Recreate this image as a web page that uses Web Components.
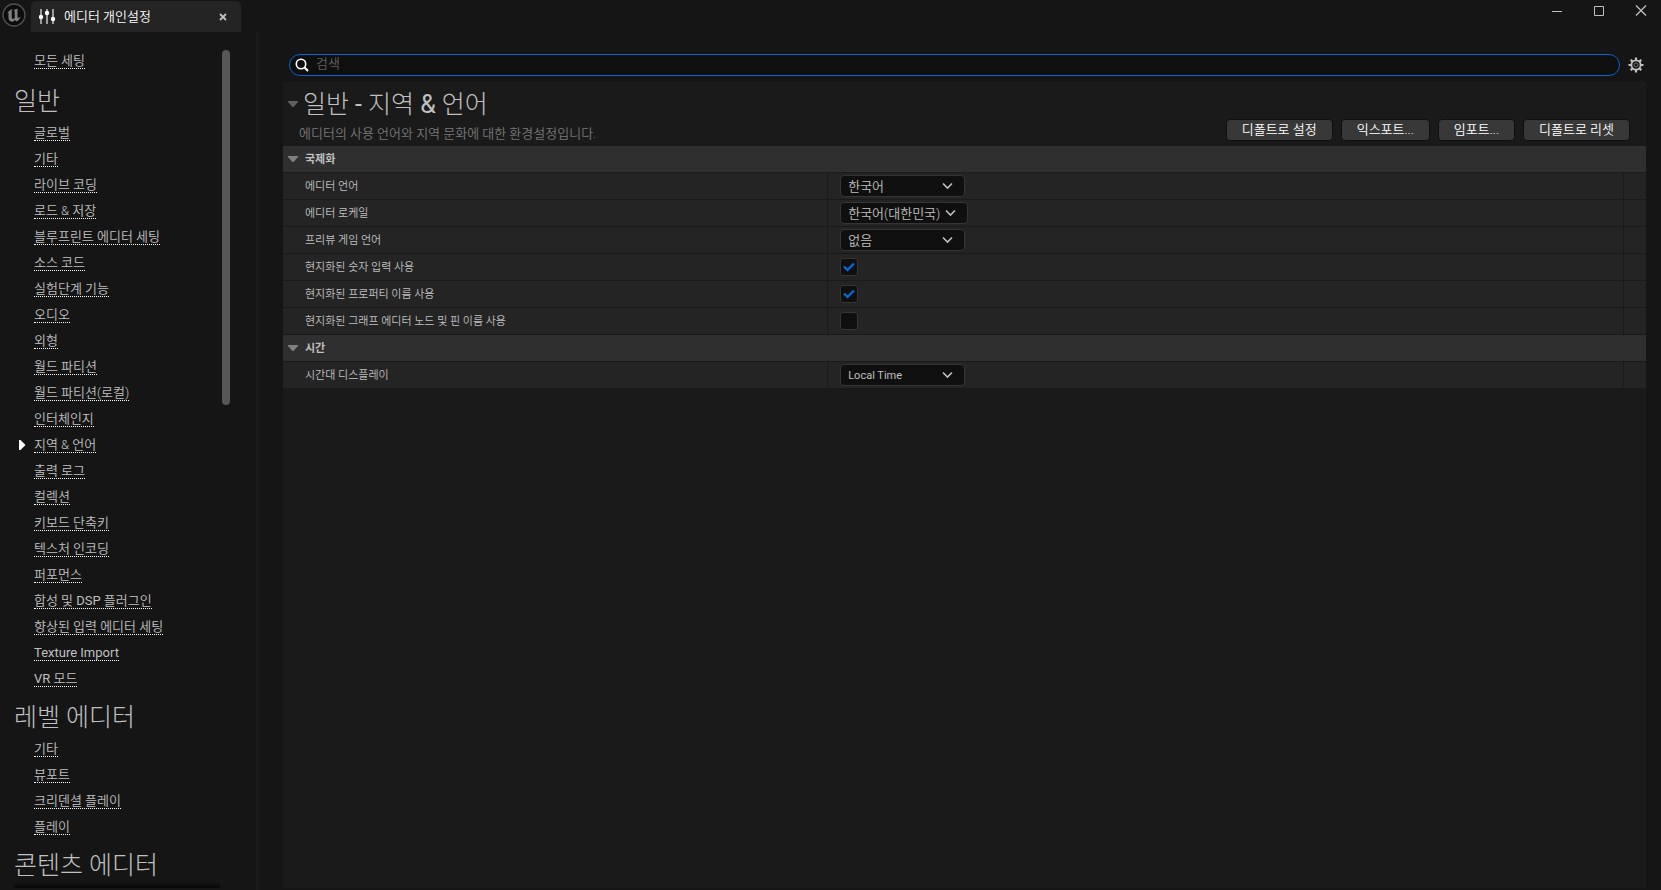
<!DOCTYPE html>
<html lang="ko">
<head>
<meta charset="utf-8">
<title>에디터 개인설정</title>
<style>
    body {
        margin: 0;
        background: #151515;
        color: #c0c0c0;
        font-family: Roboto, "Noto Sans CJK KR", sans-serif;
        font-size: 13px;
        font-weight: 350;
    }
</style>
</head>
<body>
<editor-window>
    <window-bar slot="bar" text="에디터 개인설정"></window-bar>
    <settings-nav slot="nav">
        <nav-link text="모든 세팅"></nav-link>
        <nav-section text="일반">
            <nav-link text="글로벌"></nav-link>
            <nav-link text="기타"></nav-link>
            <nav-link text="라이브 코딩"></nav-link>
            <nav-link text="로드 &amp; 저장"></nav-link>
            <nav-link text="블루프린트 에디터 세팅"></nav-link>
            <nav-link text="소스 코드"></nav-link>
            <nav-link text="실험단계 기능"></nav-link>
            <nav-link text="오디오"></nav-link>
            <nav-link text="외형"></nav-link>
            <nav-link text="월드 파티션"></nav-link>
            <nav-link text="월드 파티션(로컬)"></nav-link>
            <nav-link text="인터체인지"></nav-link>
            <nav-link text="지역 &amp; 언어" current></nav-link>
            <nav-link text="출력 로그"></nav-link>
            <nav-link text="컬렉션"></nav-link>
            <nav-link text="키보드 단축키"></nav-link>
            <nav-link text="텍스처 인코딩"></nav-link>
            <nav-link text="퍼포먼스"></nav-link>
            <nav-link text="합성 및 DSP 플러그인"></nav-link>
            <nav-link text="향상된 입력 에디터 세팅"></nav-link>
            <nav-link text="Texture Import"></nav-link>
            <nav-link text="VR 모드"></nav-link>
        </nav-section>
        <nav-section text="레벨 에디터">
            <nav-link text="기타"></nav-link>
            <nav-link text="뷰포트"></nav-link>
            <nav-link text="크리덴셜 플레이"></nav-link>
            <nav-link text="플레이"></nav-link>
        </nav-section>
        <nav-section text="콘텐츠 에디터"></nav-section>
    </settings-nav>
    <search-bar placeholder="검색"></search-bar>
    <settings-panel text="일반 - 지역 &amp; 언어" description="에디터의 사용 언어와 지역 문화에 대한 환경설정입니다.">
        <slate-button slot="actions" text="디폴트로 설정"></slate-button>
        <slate-button slot="actions" text="익스포트..."></slate-button>
        <slate-button slot="actions" text="임포트..."></slate-button>
        <slate-button slot="actions" text="디폴트로 리셋"></slate-button>
        <settings-category text="국제화">
            <settings-row text="에디터 언어" type="select" value="한국어"></settings-row>
            <settings-row text="에디터 로케일" type="select" value="한국어(대한민국)"></settings-row>
            <settings-row text="프리뷰 게임 언어" type="select" value="없음"></settings-row>
            <settings-row text="현지화된 숫자 입력 사용" type="checkbox" checked></settings-row>
            <settings-row text="현지화된 프로퍼티 이름 사용" type="checkbox" checked></settings-row>
            <settings-row text="현지화된 그래프 에디터 노드 및 핀 이름 사용" type="checkbox"></settings-row>
        </settings-category>
        <settings-category text="시간">
            <settings-row text="시간대 디스플레이" type="select" value="Local Time" small></settings-row>
        </settings-category>
    </settings-panel>
</editor-window>

<script>
// attaches an open shadow root with the given markup
class SlateElement extends HTMLElement {
    constructor() {
        super();
        this.attachShadow({mode: "open"});
        const template = document.createElement("template");
        template.innerHTML = this.constructor.markup;
        this.shadowRoot.appendChild(template.content.cloneNode(true));
    }

    connectedCallback() {
        const label = this.shadowRoot.querySelector(".text");
        if (label) label.textContent = this.getAttribute("text");
    }
}

class EditorWindow extends SlateElement {
    static markup = `
        <style>
        :host {
            display: flex;
            flex-direction: column;
            height: 100vh;
            overflow: hidden;
        }
        .body {
            display: flex;
            flex: 1;
            min-height: 0;
        }
        .splitter {
            width: 3px;
            background: #1a1a1a;
        }
        main {
            display: flex;
            flex-direction: column;
            flex: 1;
            min-width: 0;
            padding: 22px 15px 2px 24px;
        }
        </style>
        <slot name="bar"></slot>
        <div class="body">
            <slot name="nav"></slot>
            <div class="splitter"></div>
            <main><slot></slot></main>
        </div>
    `;
}

class WindowBar extends SlateElement {
    static markup = `
        <style>
        :host {
            display: flex;
            height: 32px;
        }
        svg { display: block; }
        .logo { margin: 1px 3px 0 1px; }
        .tab {
            display: flex;
            align-items: center;
            width: 210px;
            box-sizing: border-box;
            margin-top: 1px;
            padding: 0 14px 0 8px;
            border-radius: 5px 5px 0 0;
            background: #242424;
            color: #fff;
        }
        .text {
            flex: 1;
            margin-left: 8px;
            font-size: 13px;
            line-height: 16px;
        }
        button {
            padding: 0;
            border: 0;
            background: none;
            color: #c0c0c0;
        }
        .controls {
            display: flex;
            gap: 26px;
            margin: 3px 12px 0 auto;
        }
        .controls button {
            width: 16px;
            height: 16px;
        }
        </style>
        <svg class="logo" width="27" height="27" viewBox="0 0 27 27">
            <circle cx="13" cy="14" r="11" fill="#0c0c0c" stroke="#505050" stroke-width="1.3"/>
            <path d="M6 13.500C6.700 10.800 8.800 8.800 11.800 7.900c-.8.8-1 1.200-1 2v6.500c0 .9.5 1.400 1.200 1.400.6 0 1.200-.4 1.700-.9v-6.300c0-.9-.5-1.200-1.200-1.200 1.100-1.200 2.900-1.500 4.600-1.700-.5.5-.6.9-.6 1.500v6.600c0 .8.300 1.200.9 1.200.8 0 1.700-.8 2.300-1.700-.6 2.800-2.200 4.400-4.200 5.200l-1.600-1.600-1.900 1.800c-2.800 0-4.500-1.500-4.500-3.800v-4.300c0-.9-.3-1.200-1.500.9z" fill="#808080"/>
        </svg>
        <div class="tab">
            <svg width="17" height="17" viewBox="0 0 17 17">
                <g fill="#9c9c9c">
                    <rect x="1" y="1" width="2" height="15"/>
                    <rect x="7" y="1" width="2" height="15"/>
                    <rect x="13" y="1" width="2" height="15"/>
                </g>
                <g fill="#fff">
                    <circle cx="2" cy="9" r="2.200"/>
                    <circle cx="8" cy="5" r="2.200"/>
                    <circle cx="14" cy="11" r="2.200"/>
                </g>
            </svg>
            <span class="text"></span>
            <button aria-label="탭 닫기">
                <svg width="8" height="8" viewBox="0 0 8 8" fill="none" stroke="currentColor" stroke-width="1.800"><path d="M1 1l6 6M7 1L1 7"/></svg>
            </button>
        </div>
        <div class="controls">
            <button aria-label="최소화">
                <svg width="16" height="16" viewBox="0 0 16 16" fill="none" stroke="currentColor"><path d="M3 8.500h10"/></svg>
            </button>
            <button aria-label="최대화">
                <svg width="16" height="16" viewBox="0 0 16 16" fill="none" stroke="currentColor"><path d="M3.500 3.500h9v9h-9z"/></svg>
            </button>
            <button aria-label="닫기">
                <svg width="16" height="16" viewBox="0 0 16 16" fill="none" stroke="currentColor" stroke-width="1.300"><path d="M3 2.500l10 10M13 2.500l-10 10"/></svg>
            </button>
        </div>
    `;
}

class SettingsNav extends SlateElement {
    static markup = `
        <style>
        :host {
            display: flex;
            flex: none;
            position: relative;
            width: 256px;
            overflow: hidden;
        }
        nav {
            flex: 1;
            padding: 16px 0 0 14px;
        }
        .track {
            width: 8px;
            margin: 18px 26px 0 0;
        }
        .thumb {
            height: calc(42% + 2px);
            border-radius: 4px;
            background: #575757;
        }
        /* more content below the fold */
        .shade {
            position: absolute;
            right: 36px;
            bottom: 2px;
            left: 14px;
            height: 6px;
            background: linear-gradient(transparent, #080808);
        }
        ::slotted(nav-link) { margin-bottom: 2px; }
        </style>
        <nav><slot></slot></nav>
        <div class="track"><div class="thumb"></div></div>
        <div class="shade"></div>
    `;
}

class NavSection extends SlateElement {
    static markup = `
        <style>
        :host { display: block; }
        h2 {
            margin: 0;
            padding: 10px 0 2px;
            font-size: 25px;
            font-weight: 300;
            line-height: 32px;
            white-space: nowrap;
        }
        </style>
        <h2 class="text"></h2>
        <slot></slot>
    `;
}

class NavLink extends SlateElement {
    static markup = `
        <style>
        :host {
            display: flex;
            align-items: center;
            height: 26px;
        }
        svg {
            width: 7px;
            margin: 0 8px 0 5px;
            visibility: hidden;
        }
        :host([current]) svg { visibility: visible; }
        a {
            border-bottom: 1px dotted #fff;
            color: inherit;
            font-size: 13px;
            line-height: 14px;
            text-decoration: none;
            white-space: nowrap;
        }
        a b { font-weight: 400; }
        </style>
        <svg height="10" viewBox="0 0 7 10" fill="#fff"><path d="M0 0h1.500L6.500 5 1.500 10H0z"/></svg>
        <a class="text" href="#"></a>
    `;

    connectedCallback() {
        super.connectedCallback();

        // Latin words need the regular weight to look as dark as the Hangul
        const link = this.shadowRoot.querySelector("a");
        link.innerHTML = link.innerHTML.replace(/[A-Z][A-Za-z ]*[A-Za-z]/g, "<b>$&</b>");
    }
}

class SearchBar extends SlateElement {
    static markup = `
        <style>
        :host {
            display: flex;
            align-items: center;
            gap: 8px;
            padding: 0 2px 6px 6px;
        }
        svg { display: block; }
        label {
            display: flex;
            flex: 1;
            align-items: center;
            gap: 7px;
            height: 20px;
            padding: 0 6px 0 5px;
            border: 1px solid #0068d0;
            border-radius: 11px;
            background: #0f0f0f;
            color: #fff;
        }
        input {
            flex: 1;
            min-width: 0;
            padding: 0 0 2px;
            border: 0;
            outline: 0;
            background: none;
            color: #c0c0c0;
            font: inherit;
            line-height: 18px;
        }
        input::placeholder { color: #606060; }
        button {
            padding: 0;
            border: 0;
            background: none;
            color: #c0c0c0;
        }
        </style>
        <label>
            <svg width="14" height="14" viewBox="0 0 14 14" fill="none" stroke="currentColor" stroke-width="1.600"><circle cx="6" cy="6" r="4.700"/><path d="M9.300 9.300L13 13" stroke-width="2"/></svg>
            <input type="text" aria-label="검색">
        </label>
        <button aria-label="설정">
            <svg width="16" height="16" viewBox="0 0 16 16" fill="none" stroke="currentColor">
                <circle cx="8" cy="8" r="4.600" stroke-width="1.800"/>
                <circle cx="8" cy="8" r="2" stroke="#707070"/>
                <path d="M8 .5V3M8 13v2.500M.5 8H3M13 8h2.500M2.700 2.700l1.800 1.800M11.500 11.500l1.800 1.800M2.700 13.300l1.800-1.800M11.500 4.500l1.800-1.800" stroke-width="2.200"/>
            </svg>
        </button>
    `;

    connectedCallback() {
        this.shadowRoot.querySelector("input").placeholder = this.getAttribute("placeholder");
    }
}

class SettingsPanel extends SlateElement {
    static markup = `
        <style>
        :host {
            display: block;
            flex: 1;
            background: #1a1a1a;
        }
        header {
            display: flex;
            align-items: flex-end;
            justify-content: space-between;
            height: 64px;
            padding: 0 16px 0 5px;
        }
        .title {
            display: flex;
            align-items: center;
            gap: 5px;
        }
        h1 {
            margin: 0;
            font-size: 25px;
            font-weight: 300;
            line-height: 32px;
        }
        h1 b { font-weight: 400; }
        p {
            margin: 0;
            padding: 4px 0 3px 11px;
            color: #787878;
            font-size: 13px;
            line-height: 18px;
        }
        .title svg { padding-bottom: 2px; }
        .actions {
            display: flex;
            gap: 8px;
            padding-bottom: 5px;
        }
        </style>
        <header>
            <div>
                <div class="title">
                    <svg width="10" height="6" viewBox="0 0 10 6" fill="#606060"><path d="M0 0h10v1L5.500 6h-1L0 1z"/></svg>
                    <h1 class="text"></h1>
                </div>
                <p></p>
            </div>
            <div class="actions"><slot name="actions"></slot></div>
        </header>
        <slot></slot>
    `;

    connectedCallback() {
        super.connectedCallback();
        this.shadowRoot.querySelector("p").textContent = this.getAttribute("description");

        // signs are set heavier than the Hangul around them
        const title = this.shadowRoot.querySelector("h1");
        title.innerHTML = title.innerHTML.replace(/-|&amp;/g, "<b>$&</b>");
    }
}

class SlateButton extends SlateElement {
    static markup = `
        <style>
        :host { display: block; }
        button {
            display: block;
            height: 22px;
            padding: 0 15px;
            border: 1px solid #0f0f0f;
            border-radius: 4px;
            background: #383838;
            color: #fff;
            font: inherit;
            line-height: 18px;
        }
        </style>
        <button class="text"></button>
    `;
}

class SettingsCategory extends SlateElement {
    static markup = `
        <style>
        :host { display: block; }
        h3 {
            display: flex;
            align-items: center;
            gap: 7px;
            height: 26px;
            margin: 0;
            padding-left: 5px;
            border-bottom: 1px solid #1a1a1a;
            background: #2f2f2f;
            font-size: 11px;
            font-weight: 700;
        }
        .text { padding-bottom: 2px; }
        </style>
        <h3>
            <svg width="10" height="6" viewBox="0 0 10 6" fill="#808080"><path d="M0 0h10v1L5.500 6h-1L0 1z"/></svg>
            <span class="text"></span>
        </h3>
        <slot></slot>
    `;
}

class SettingsRow extends SlateElement {
    static markup = `
        <style>
        :host {
            display: grid;
            grid-template: 26px / calc(40% - 1px) 1fr 22px;
            border-bottom: 1px solid #1a1a1a;
            background: #242424;
            font-size: 11px;
        }
        .text {
            padding: 1px 0 0 22px;
            line-height: 26px;
        }
        .value {
            display: flex;
            align-items: center;
            padding-left: 12px;
            border-left: 1px solid #1a1a1a;
            border-right: 1px solid #1a1a1a;
        }
        .combo, .check {
            display: grid;
            align-items: center;
        }
        .combo > *, .check > * { grid-area: 1 / 1; }
        .combo svg {
            justify-self: end;
            margin-right: 12px;
            pointer-events: none;
        }
        select {
            appearance: none;
            height: 22px;
            min-width: 125px;
            padding: 0 26px 0 7px;
            border: 1px solid #353535;
            border-radius: 4px;
            background: #0f0f0f;
            color: #c0c0c0;
            font: inherit;
            font-size: 13px;
        }
        :host([small]) select {
            font-size: 11px;
            font-weight: 400;
        }
        .check svg {
            justify-self: center;
            visibility: hidden;
            pointer-events: none;
        }
        input {
            appearance: none;
            width: 18px;
            height: 18px;
            margin: 0;
            border: 1px solid #353535;
            border-radius: 3px;
            background: #0f0f0f;
        }
        input:checked + svg { visibility: visible; }
        </style>
        <label class="text" for="control"></label>
        <div class="value"></div>
    `;

    connectedCallback() {
        super.connectedCallback();
        const value = this.shadowRoot.querySelector(".value");

        if (this.getAttribute("type") === "select") {
            value.innerHTML = `
                <div class="combo">
                    <select id="control"><option></option></select>
                    <svg width="11" height="8" viewBox="0 0 11 8" fill="none" stroke="#c0c0c0" stroke-width="1.600"><path d="M1 1.500l4.500 4.500L10 1.500"/></svg>
                </div>`;
            value.querySelector("option").textContent = this.getAttribute("value");
        } else {
            value.innerHTML = `
                <div class="check">
                    <input id="control" type="checkbox">
                    <svg width="12" height="10" viewBox="0 0 12 10" fill="none" stroke="#0070e0" stroke-width="2.200"><path d="M1 4.500l3.500 3.500L11 1.500"/></svg>
                </div>`;
            value.querySelector("input").checked = this.hasAttribute("checked");
        }
    }
}

window.customElements.define("editor-window", EditorWindow)
window.customElements.define("window-bar", WindowBar)
window.customElements.define("settings-nav", SettingsNav)
window.customElements.define("nav-section", NavSection)
window.customElements.define("nav-link", NavLink)
window.customElements.define("search-bar", SearchBar)
window.customElements.define("settings-panel", SettingsPanel)
window.customElements.define("slate-button", SlateButton)
window.customElements.define("settings-category", SettingsCategory)
window.customElements.define("settings-row", SettingsRow)
</script>
</body>
</html>
